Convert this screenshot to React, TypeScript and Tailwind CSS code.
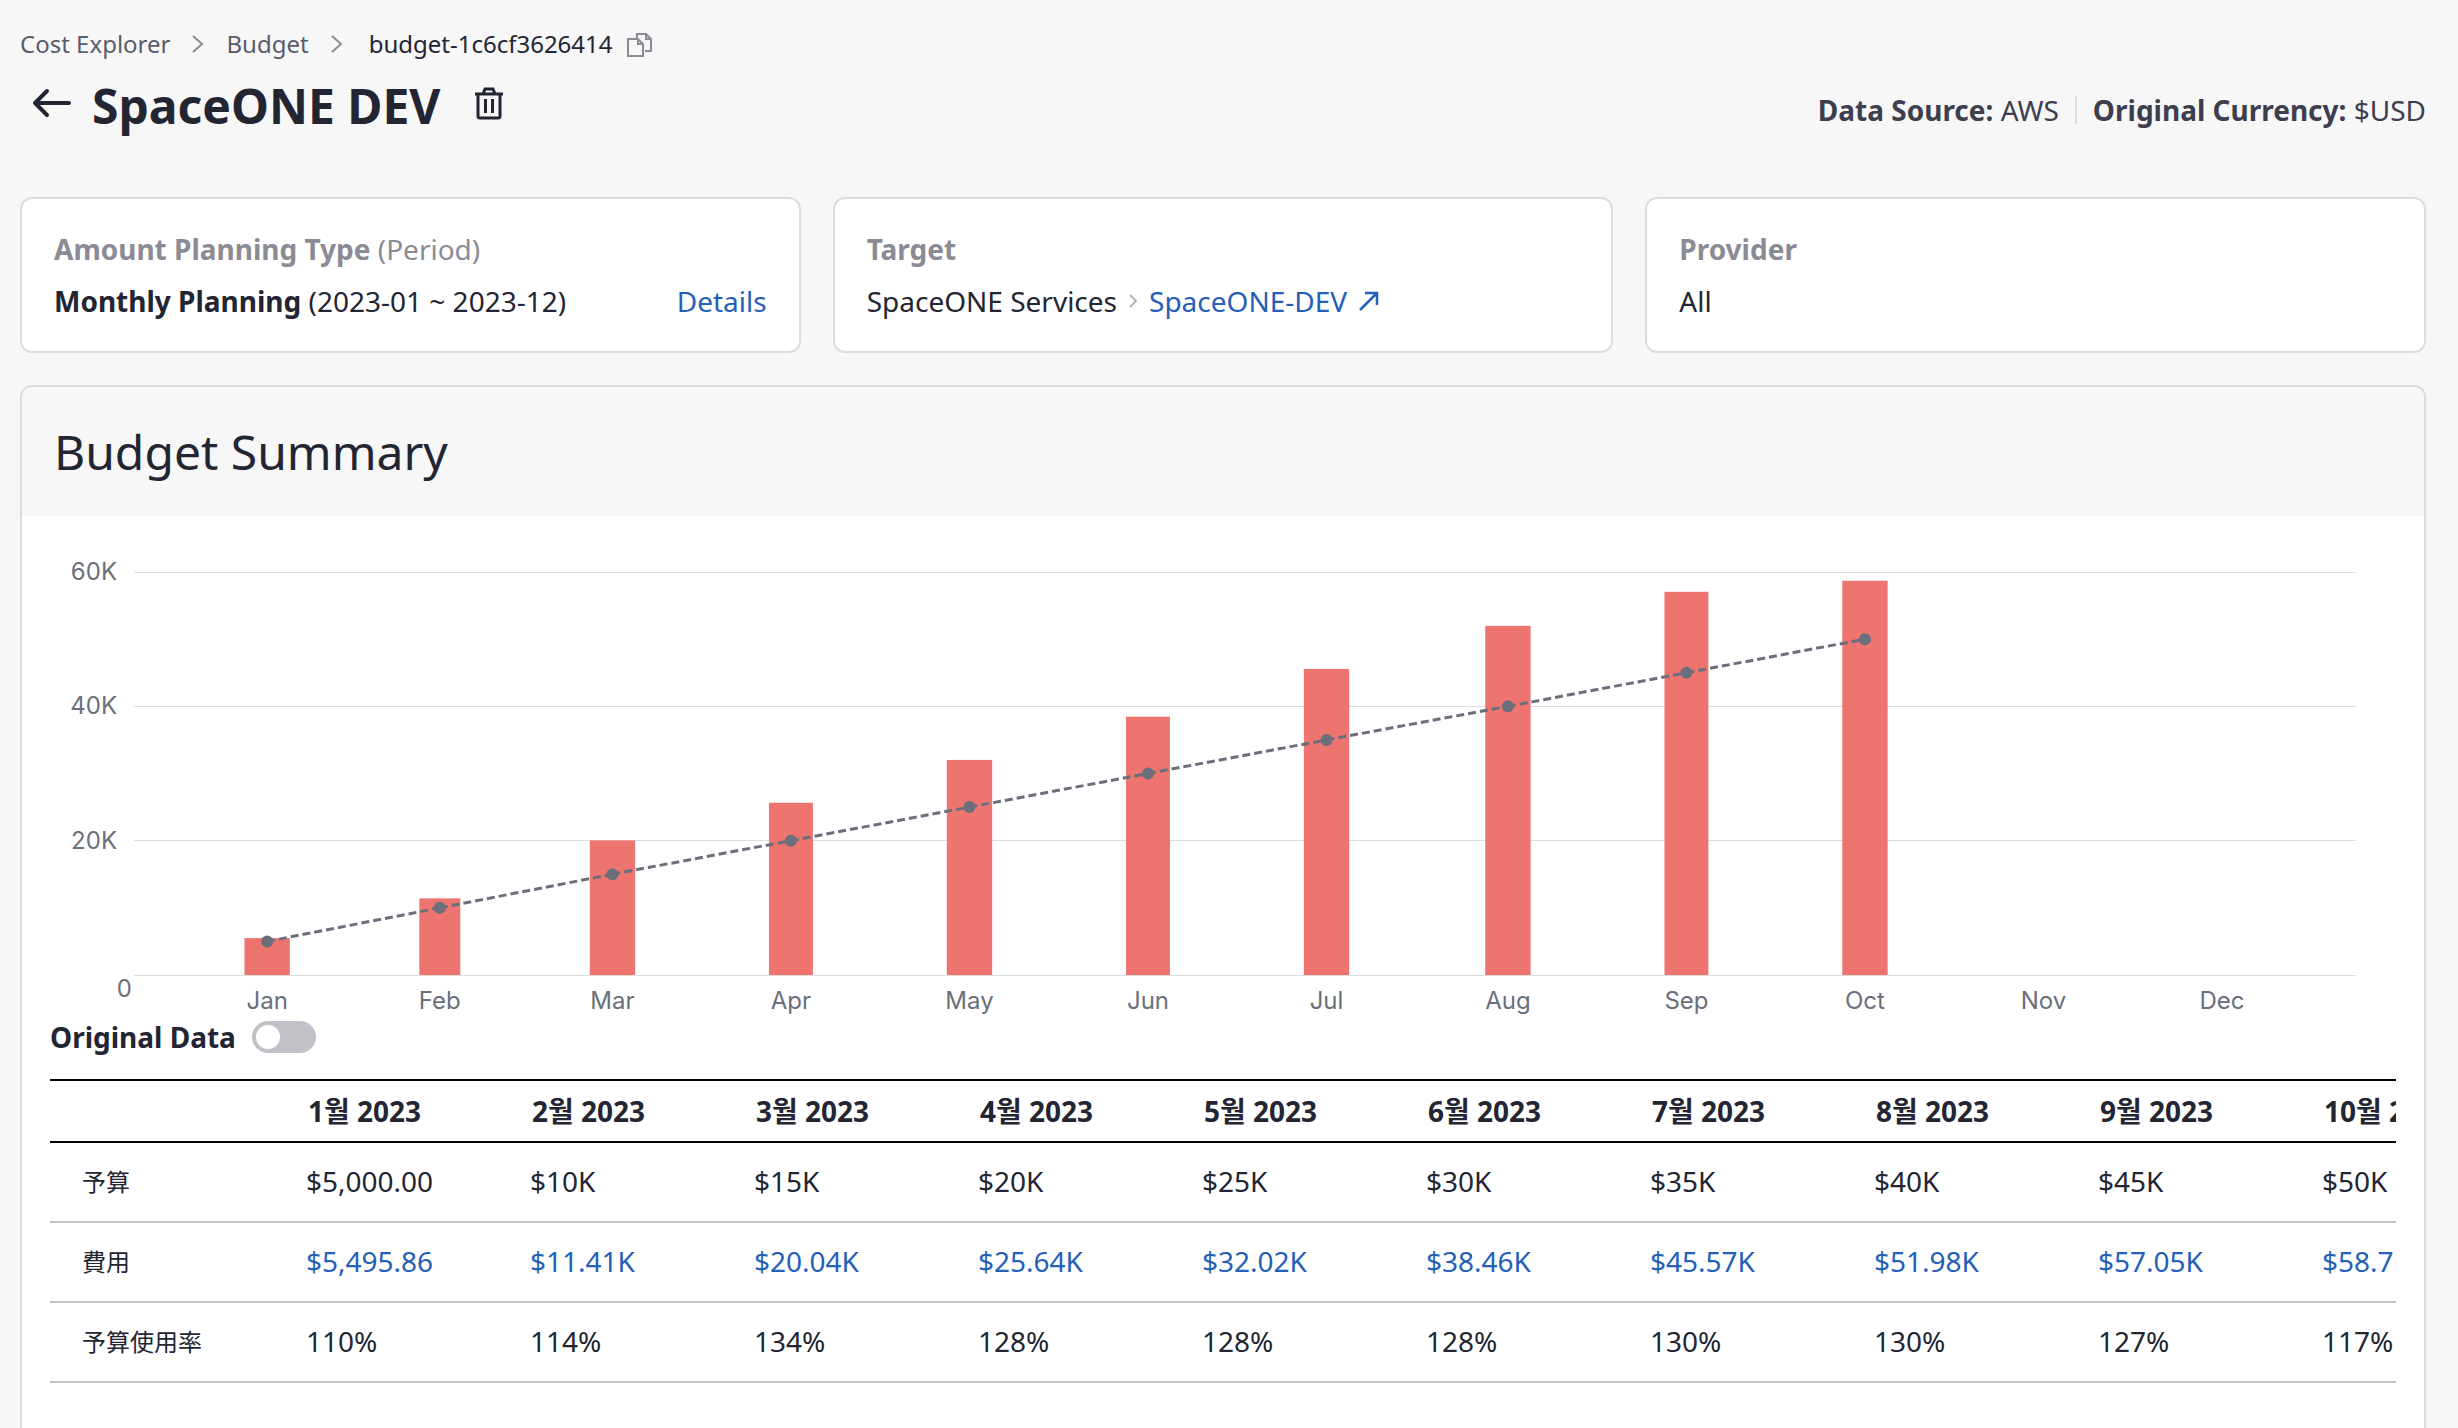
const months = [
  { label: "Jan", days: 31, budget: 5000, cost: 5495.86 },
  { label: "Feb", days: 28, budget: 10000, cost: 11410 },
  { label: "Mar", days: 31, budget: 15000, cost: 20040 },
  { label: "Apr", days: 30, budget: 20000, cost: 25640 },
  { label: "May", days: 31, budget: 25000, cost: 32020 },
  { label: "Jun", days: 30, budget: 30000, cost: 38460 },
  { label: "Jul", days: 31, budget: 35000, cost: 45570 },
  { label: "Aug", days: 31, budget: 40000, cost: 51980 },
  { label: "Sep", days: 30, budget: 45000, cost: 57050 },
  { label: "Oct", days: 31, budget: 50000, cost: 58700 },
  { label: "Nov", days: 30 },
  { label: "Dec", days: 31 },
];

const columns = [
  { month: "1월 2023", budget: "$5,000.00", cost: "$5,495.86", usage: "110%" },
  { month: "2월 2023", budget: "$10K", cost: "$11.41K", usage: "114%" },
  { month: "3월 2023", budget: "$15K", cost: "$20.04K", usage: "134%" },
  { month: "4월 2023", budget: "$20K", cost: "$25.64K", usage: "128%" },
  { month: "5월 2023", budget: "$25K", cost: "$32.02K", usage: "128%" },
  { month: "6월 2023", budget: "$30K", cost: "$38.46K", usage: "128%" },
  { month: "7월 2023", budget: "$35K", cost: "$45.57K", usage: "130%" },
  { month: "8월 2023", budget: "$40K", cost: "$51.98K", usage: "130%" },
  { month: "9월 2023", budget: "$45K", cost: "$57.05K", usage: "127%" },
  { month: "10월 2023", budget: "$50K", cost: "$58.7K", usage: "117%" },
];

// chart geometry: x is in percent of the plot, y in pixels
const PLOT_TOP = 12;
const PLOT_HEIGHT = 403;
const PAD_LEFT = 1.91;
const PAD_RIGHT = 1.95;
const DAY = (100 - PAD_LEFT - PAD_RIGHT) / 365;

const yOf = (value: number) => PLOT_TOP + PLOT_HEIGHT * (1 - value / 60000);

let elapsed = 0;
const points = months.map((m) => {
  const x = PAD_LEFT + (elapsed + m.days / 2) * DAY;
  elapsed += m.days;
  return { ...m, x, width: (m.days * DAY) / 4 };
});

function ChevronIcon() {
  return (
    <svg width="16" height="20" viewBox="0 0 16 20" fill="none" stroke="#8b8b96" strokeWidth="2">
      <path d="M3 2l9 8-9 8" />
    </svg>
  );
}

function BudgetChart() {
  const actual = points.filter((p) => p.cost !== undefined);

  return (
    <div className="pr-10 pl-[84px]">
      <svg className="block h-[454px] w-full overflow-visible font-[Inter,sans-serif] text-2xl" fill="#6b6e7b">
        {[60, 40, 20].map((tick) => (
          <text key={tick} x="-17" y={yOf(tick * 1000) + 8} textAnchor="end">
            {tick}K
          </text>
        ))}
        <text x="-2" y="437" textAnchor="end">
          0
        </text>
        {[60, 40, 20, 0].map((tick) => (
          <line
            key={tick}
            x1="0"
            x2="100%"
            y1={yOf(tick * 1000)}
            y2={yOf(tick * 1000)}
            stroke="#dddddf"
            strokeWidth="1"
            shapeRendering="crispEdges"
          />
        ))}
        {actual.map((p) => (
          <rect
            key={p.label}
            x={`${p.x - p.width / 2}%`}
            y={yOf(p.cost!)}
            width={`${p.width}%`}
            height={yOf(0) - yOf(p.cost!)}
            fill="#ee7470"
          />
        ))}
        {actual.slice(1).map((p, i) => (
          <line
            key={p.label}
            x1={`${actual[i].x}%`}
            y1={yOf(actual[i].budget!)}
            x2={`${p.x}%`}
            y2={yOf(p.budget!)}
            stroke="#6b6e7b"
            strokeWidth="3"
            strokeDasharray="8 4"
          />
        ))}
        {actual.map((p) => (
          <circle key={p.label} cx={`${p.x}%`} cy={yOf(p.budget!)} r="6" />
        ))}
        {points.map((p) => (
          <text key={p.label} x={`${p.x}%`} y="449" textAnchor="middle">
            {p.label}
          </text>
        ))}
      </svg>
    </div>
  );
}

function BudgetTable() {
  return (
    <div className="overflow-x-auto [scrollbar-width:none]">
      <table className="w-[2464px] table-fixed border-t-2 border-black text-left">
        <thead>
          <tr className="h-[62px] border-b-2 border-black">
            <td />
            {columns.map((c) => (
              <th key={c.month} className="py-0 pl-[34px] font-bold whitespace-nowrap">
                {c.month}
              </th>
            ))}
          </tr>
        </thead>
        <tbody>
          <tr className="h-20 border-b-2 border-[#c1c1c8]">
            <th className="px-8 text-2xl font-normal">予算</th>
            {columns.map((c) => (
              <td key={c.month} className="px-8 pb-0.5">
                {c.budget}
              </td>
            ))}
          </tr>
          <tr className="h-20 border-b-2 border-[#c1c1c8]">
            <th className="px-8 text-2xl font-normal">費用</th>
            {columns.map((c) => (
              <td key={c.month} className="px-8 pb-0.5">
                <a href="#" className="text-[#2560b8]">
                  {c.cost}
                </a>
              </td>
            ))}
          </tr>
          <tr className="h-20 border-b-2 border-[#c1c1c8]">
            <th className="px-8 text-2xl font-normal">予算使用率</th>
            {columns.map((c) => (
              <td key={c.month} className="px-8 pb-0.5">
                {c.usage}
              </td>
            ))}
          </tr>
        </tbody>
      </table>
    </div>
  );
}

export default function App() {
  return (
    <main className="flex min-h-screen flex-col bg-[#f7f7f7] pr-8 pl-5 font-['Noto_Sans','Noto_Sans_CJK_KR',sans-serif] text-[28px] leading-9 text-[#232533]">
      <nav className="flex items-center pt-7 text-2xl leading-8 text-[#5a5b6c]">
        <a href="#">Cost Explorer</a>
        <span className="px-5">
          <ChevronIcon />
        </span>
        <a href="#">Budget</a>
        <span className="pr-6 pl-5">
          <ChevronIcon />
        </span>
        <span className="text-[#232533]">budget-1c6cf3626414</span>
        <button aria-label="Copy" className="ml-3">
          <svg width="28" height="28" viewBox="0 0 28 28" fill="none" stroke="#8b8b96" strokeWidth="2">
            <path d="M3 9h10l5 5v12H3z" />
            <path d="M13 9v5h5" />
            <path d="M12 8V4h9l5 5v12h-6" />
            <path d="M21 4v5h5" />
          </svg>
        </button>
      </nav>

      <header className="flex items-end justify-between pt-4.5">
        <div className="flex items-center">
          <button aria-label="Back" className="ml-3">
            <svg width="40" height="40" viewBox="0 0 40 40" fill="none" stroke="#232533" strokeWidth="4" strokeLinecap="round" strokeLinejoin="round">
              <path d="M37 17H3M15 5L3 17l12 12" />
            </svg>
          </button>
          <h1 className="ml-5 text-5xl leading-[56px] font-bold">SpaceONE DEV</h1>
          <button aria-label="Delete" className="ml-8">
            <svg width="32" height="40" viewBox="0 0 32 40" fill="none" stroke="#232533" strokeWidth="3">
              <path d="M2 8h28M5 8v22a2 2 0 0 0 2 2h18a2 2 0 0 0 2-2V8M10 8l2-5h8l2 5M12.5 13v14M19.5 13v14" />
            </svg>
          </button>
        </div>
        <div className="flex items-center pb-1.5 text-[#3d3e4e]">
          <p>
            <strong>Data Source:</strong> AWS
          </p>
          <span className="mx-4 h-7 w-0.5 bg-[#dddddf]" />
          <p>
            <strong>Original Currency:</strong> $USD
          </p>
        </div>
      </header>

      <section className="mt-[63px] grid grid-cols-3 gap-8">
        <div className="rounded-xl border-2 border-[#dddddf] bg-white px-8 py-8">
          <h2 className="text-[#8b8b96]">
            <strong>Amount Planning Type</strong> (Period)
          </h2>
          <div className="mt-4 flex justify-between">
            <p>
              <strong>Monthly Planning</strong> (2023-01 ~ 2023-12)
            </p>
            <button className="text-[#2560b8]">Details</button>
          </div>
        </div>
        <div className="rounded-xl border-2 border-[#dddddf] bg-white px-8 py-8">
          <h2 className="font-bold text-[#8b8b96]">Target</h2>
          <div className="mt-4 flex items-center">
            <span>SpaceONE Services</span>
            <svg className="mr-2.5 ml-3" width="10" height="14" viewBox="0 0 10 14" fill="none" stroke="#b5b5bd" strokeWidth="2">
              <path d="M1 1l6 6-6 6" />
            </svg>
            <a href="#" className="flex items-center gap-3 text-[#2560b8]">
              SpaceONE-DEV
              <svg width="20" height="20" viewBox="0 0 20 20" fill="none" stroke="currentColor" strokeWidth="2.5">
                <path d="M1 19L18 2M6 2h12v12" />
              </svg>
            </a>
          </div>
        </div>
        <div className="rounded-xl border-2 border-[#dddddf] bg-white px-8 py-8">
          <h2 className="font-bold text-[#8b8b96]">Provider</h2>
          <p className="mt-4">All</p>
        </div>
      </section>

      <section className="mt-8 flex-1 rounded-t-xl border-2 border-b-0 border-[#dddddf] bg-white">
        <h2 className="rounded-t-xl bg-[#f7f7f7] px-8 py-8 text-5xl leading-[65px]">Budget Summary</h2>
        <div className="px-7 py-11">
          <BudgetChart />
          <label className="mt-[5px] flex items-center gap-4">
            <span className="font-bold">Original Data</span>
            <input
              type="checkbox"
              className="h-8 w-16 appearance-none rounded-full bg-[#c1c1c8] p-1 before:block before:size-6 before:rounded-full before:bg-white checked:bg-[#2560b8] checked:before:ml-8"
            />
          </label>
          <div className="mt-6">
            <BudgetTable />
          </div>
        </div>
      </section>
    </main>
  );
}
